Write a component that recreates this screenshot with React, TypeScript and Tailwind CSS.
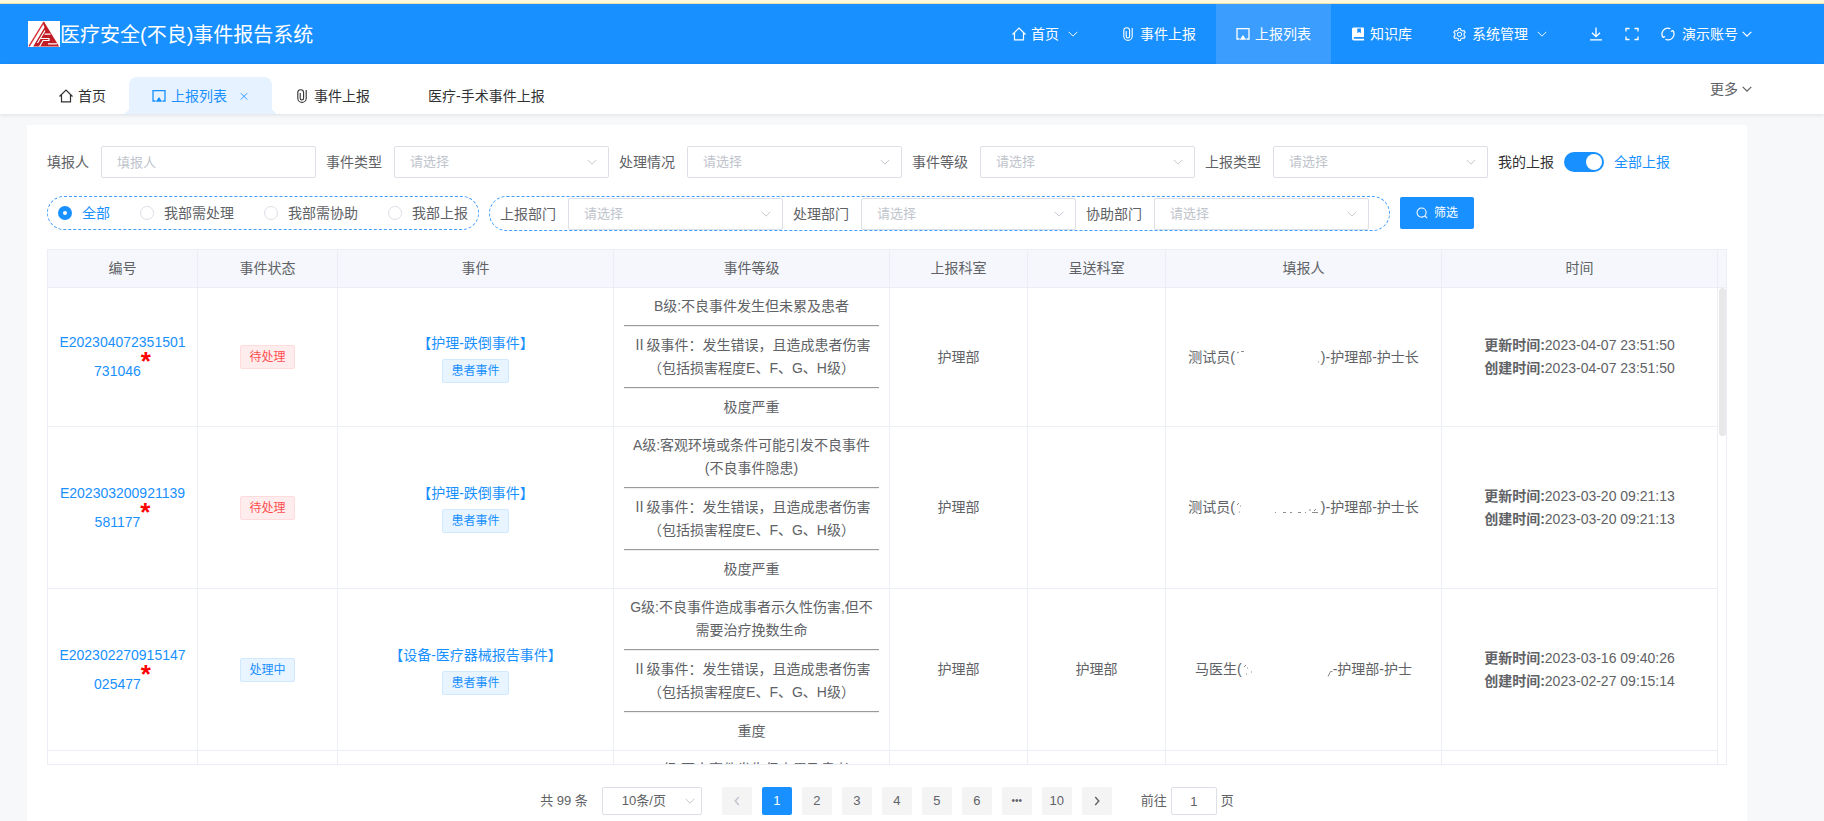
import { useState } from 'react';
import type { ReactNode } from 'react';
import { AiOutlineSetting } from 'react-icons/ai';
import clsx from 'clsx';

interface ReportEvent {
  id: string;
  idTail: string;
  status: '待处理' | '处理中';
  title: string;
  levels: string[];
  reportDept: string;
  sendDept: string;
  reporter: { name: string; rest: string; trace: string };
  updated: string;
  created: string;
}

const LEVEL_TWO = 'Ⅱ级事件：发生错误，且造成患者伤害（包括损害程度E、F、G、H级）';

const events: ReportEvent[] = [
  {
    id: 'E202304072351501',
    idTail: '731046',
    status: '待处理',
    title: '【护理-跌倒事件】',
    levels: ['B级:不良事件发生但未累及患者', LEVEL_TWO, '极度严重'],
    reportDept: '护理部',
    sendDept: '',
    reporter: { name: '测试员(', rest: ')-护理部-护士长', trace: 'M2 3l2-1M6 1.5h3M83 12h1' },
    updated: '2023-04-07 23:51:50',
    created: '2023-04-07 23:51:50'
  },
  {
    id: 'E202303200921139',
    idTail: '581177',
    status: '待处理',
    title: '【护理-跌倒事件】',
    levels: ['A级:客观环境或条件可能引发不良事件(不良事件隐患)', LEVEL_TWO, '极度严重'],
    reportDept: '护理部',
    sendDept: '',
    reporter: { name: '测试员(', rest: ')-护理部-护士长', trace: 'M2 4l2-2M5 5h1M4 11h1M40 11.500h1M48 11.500h3M55 11.500h2M63 11.500h3M70 11.500h1M74 9h2M77 11.500h6M79 10l2-2' },
    updated: '2023-03-20 09:21:13',
    created: '2023-03-20 09:21:13'
  },
  {
    id: 'E202302270915147',
    idTail: '025477',
    status: '处理中',
    title: '【设备-医疗器械报告事件】',
    levels: ['G级:不良事件造成事者示久性伤害,但不需要治疗挽数生命', LEVEL_TWO, '重度'],
    reportDept: '护理部',
    sendDept: '护理部',
    reporter: { name: '马医生(', rest: '-护理部-护士', trace: 'M2 4l2-2M5 5h1M4 11h1M9 9h1M86 13.500l2.500-5h2' },
    updated: '2023-03-16 09:40:26',
    created: '2023-02-27 09:15:14'
  },
  {
    id: 'E202302210915032',
    idTail: '410268',
    status: '处理中',
    title: '【护理-跌倒事件】',
    levels: ['B级:不良事件发生但未累及患者', LEVEL_TWO, '重度'],
    reportDept: '护理部',
    sendDept: '护理部',
    reporter: { name: '马医生(', rest: ')-护理部-护士', trace: '' },
    updated: '2023-02-21 09:15:03',
    created: '2023-02-21 09:15:03'
  }
];

const columns = ['编号', '事件状态', '事件', '事件等级', '上报科室', '呈送科室', '填报人', '时间'];

/* ---------- ICONS ---------- */

function Svg({ children, className }: { children: ReactNode; className?: string }) {
  return (
    <svg viewBox="0 0 14 14" fill="none" stroke="currentColor" aria-hidden="true" className={clsx('shrink-0', className ?? 'h-3.5 w-3.5')}>
      {children}
    </svg>
  );
}

const HomeIcon = () => (
  <Svg><path d="M.5 7.500 7 1l6.500 6.500M2.500 6v6.900h9V6" strokeWidth="1.200" /></Svg>
);
const ClipIcon = () => (
  <Svg><path d="M5.200 4v5.300a1.700 1.700 0 0 0 3.400 0V3.600a2.900 2.900 0 0 0-5.800 0v5.600a4.200 4.200 0 0 0 8.400 0V1" strokeWidth="1.100" /></Svg>
);
const ScreenIcon = () => (
  <Svg>
    <path d="M3.500 12H1V1.600h12V12h-2.500" strokeWidth="1.300" />
    <path d="m7 8 3.300 4.800H3.700z" fill="currentColor" stroke="none" />
  </Svg>
);
const BookIcon = () => (
  <Svg>
    <path fillRule="evenodd" d="M2.500.5h9.500a1 1 0 0 1 1 1V10H3.600a.9.9 0 0 0 0 1.800H13v1.700H2.800A1.800 1.800 0 0 1 1 11.700V2A1.500 1.500 0 0 1 2.500.5ZM6.300 1.500v4.800l1.800-1.400 1.800 1.400V1.500Z" fill="currentColor" stroke="none" />
  </Svg>
);
const DownloadIcon = () => (
  <Svg><path d="M7 .5v9M3 5.700l4 4 4-4M1 12.800h12" strokeWidth="1.300" /></Svg>
);
const FullscreenIcon = () => (
  <Svg><path d="M1 4.500V1.500h3.500M9.500 1.500H13v3M13 9.500v3H9.500M4.500 12.500H1v-3" strokeWidth="1.300" /></Svg>
);
const RefreshIcon = () => (
  <Svg><path d="M2.200 10.400A5.800 5.800 0 0 1 9.500 1.800M11.800 3.600A5.800 5.800 0 0 1 4.500 12.200M.8 8.700l1.400 1.800 1.900-1.100M13.200 5.300l-1.400-1.800-1.900 1.100" strokeWidth="1.200" /></Svg>
);
const SearchIcon = () => (
  <Svg className="h-3 w-3"><circle cx="6.500" cy="6.500" r="5.300" strokeWidth="1.200" /><path d="m10.300 10.300 2.700 2.700" strokeWidth="1.200" /></Svg>
);
const ChevronDown = ({ bold, className }: { bold?: boolean; className?: string }) => (
  <Svg className={clsx('h-2.5 w-2.5', className)}><path d="m1 4 6 6 6-6" strokeWidth={bold ? 1.8 : 1.3} /></Svg>
);

function Logo() {
  return (
    <svg viewBox="0 0 32 26" className="h-[26px] w-8 shrink-0 bg-white" aria-hidden="true">
      <path d="M16 .8 1 25.300" fill="none" stroke="#d6303a" strokeWidth="1.400" />
      <path d="M16 .8 31.200 25.500H5.200L16.500 6.500 15.200 3Z" fill="#c01d26" />
      <path d="M17 9.500 9.500 22M13 17.500h8v2h-6l-3.500 6" fill="none" stroke="#fff" strokeWidth="1.200" />
      <path d="M16.500 13.200h6M20 22.800h9" stroke="#fff" strokeWidth="1.200" />
    </svg>
  );
}

/* ---------- FORM PARTS ---------- */

function SelectField({ id, label }: { id: string; label: string }) {
  return (
    <div className="flex items-center gap-3">
      <label htmlFor={id}>{label}</label>
      <div className="relative">
        <select id={id} className="h-8 w-[215px] appearance-none rounded-xs border border-[#dcdfe6] bg-white px-[15px] text-[13px] text-[#c0c4cc] outline-none">
          <option>请选择</option>
        </select>
        <ChevronDown className="pointer-events-none absolute top-[11px] right-3 text-[#c0c4cc]" />
      </div>
    </div>
  );
}

function Tag({ danger, children }: { danger?: boolean; children: ReactNode }) {
  return (
    <span
      className={clsx(
        'inline-block h-6 rounded-xs border px-2 text-xs leading-[22px]',
        danger ? 'border-[#ffdbdb] bg-[#ffeded] text-[#ff4d4f]' : 'border-[#d1e9ff] bg-[#e8f4ff] text-[#1890ff]'
      )}
    >
      {children}
    </span>
  );
}

function Columns() {
  return (
    <colgroup>
      <col className="w-[150px]" />
      <col className="w-[140px]" />
      <col />
      <col />
      <col className="w-[138px]" />
      <col className="w-[138px]" />
      <col />
      <col />
    </colgroup>
  );
}

function EventRow({ event }: { event: ReportEvent }) {
  // a missing closing bracket belongs to the masked part, which is wider then
  const wideMask = !event.reporter.rest.startsWith(')');

  return (
    <tr className="[&>td]:border-r [&>td]:border-b [&>td]:border-[#ebeef5] [&>td]:px-[10px] [&>td]:py-[7px]">
      <td>
        <a href="#" className="block leading-[29px] text-[#1890ff]">
          {event.id}
          <span className="flex h-[29px] justify-center">
            {event.idTail}
            <span className="text-[26px] leading-[8px] font-bold text-[#ff0000]">*</span>
          </span>
        </a>
      </td>
      <td><Tag danger={event.status === '待处理'}>{event.status}</Tag></td>
      <td>
        <a href="#" className="mb-1 block text-[#1890ff]">{event.title}</a>
        <Tag>患者事件</Tag>
      </td>
      <td>
        {event.levels.map((level, i) => (
          <div key={level}>
            {i > 0 && <hr className="my-[7px] h-[2px] border-t border-b border-t-[#9a9a9a] border-b-[#eeeeee]" />}
            <p>{level}</p>
          </div>
        ))}
      </td>
      <td>{event.reportDept}</td>
      <td>{event.sendDept}</td>
      <td>
        <div className="flex items-center justify-center">
          {event.reporter.name}
          <svg viewBox={wideMask ? '0 0 91 14' : '0 0 86 14'} className={clsx('h-3.5', wideMask ? 'w-[91px]' : 'w-[86px]')} fill="none" stroke="#8b8d92" aria-hidden="true">
            <path d={event.reporter.trace} />
          </svg>
          {event.reporter.rest}
        </div>
      </td>
      <td>
        <p><b>更新时间:</b>{event.updated}</p>
        <p><b>创建时间:</b>{event.created}</p>
      </td>
    </tr>
  );
}

/* ---------- PAGE ---------- */

export default function App() {
  const [scope, setScope] = useState('全部');
  const [showAll, setShowAll] = useState(true);
  const [page, setPage] = useState('1');

  return (
    <div className="flex h-screen flex-col overflow-hidden bg-[#f6f8fa] font-['Liberation_Sans','Noto_Sans_CJK_SC',sans-serif] text-sm text-[#606266]">
      <div className="h-1 shrink-0 border-b border-[#ece0ae] bg-[#fff8dc]" />

      {/* HEADER */}
      <header className="flex h-[60px] shrink-0 items-center bg-[#1890ff] pr-[72px] pl-7 text-white">
        <Logo />
        <h1 className="pt-0.5 text-xl">医疗安全(不良)事件报告系统</h1>
        <nav className="ml-auto flex h-full [&>a]:flex [&>a]:items-center [&>a]:gap-[5px] [&>a]:px-5">
          <a href="#"><HomeIcon />首页<ChevronDown className="mr-[3px] ml-1" /></a>
          <a href="#"><ClipIcon />事件上报</a>
          <a href="#" className="bg-[#3b9eff]"><ScreenIcon />上报列表</a>
          <a href="#"><BookIcon />知识库</a>
          <a href="#"><AiOutlineSetting className="h-[15px] w-[15px]" />系统管理<ChevronDown className="mr-[3px] ml-1" /></a>
        </nav>
        <div className="ml-[19px] flex items-center gap-[22px]">
          <button aria-label="下载"><DownloadIcon /></button>
          <button aria-label="全屏"><FullscreenIcon /></button>
          <button className="flex items-center gap-[7px]">
            <RefreshIcon />
            <span className="flex items-center gap-1">演示账号<ChevronDown bold /></span>
          </button>
        </div>
      </header>

      {/* TABS */}
      <div className="z-10 flex h-[50px] shrink-0 items-end bg-white pr-[72px] pl-9 text-[#303133] shadow-[0_1px_4px_rgba(0,21,41,0.10)]">
        <a href="#" className="flex h-[37px] items-center gap-[5px] px-[23px]"><HomeIcon />首页</a>
        <div className="relative flex h-[37px] items-center rounded-t-lg bg-[#e6f2ff] px-[23px] text-[#1890ff] before:absolute before:bottom-0 before:-left-[7px] before:h-[7px] before:w-[7px] before:bg-[radial-gradient(circle_at_0_0,transparent_7px,#e6f2ff_7px)] after:absolute after:-right-[7px] after:bottom-0 after:h-[7px] after:w-[7px] after:bg-[radial-gradient(circle_at_100%_0,transparent_7px,#e6f2ff_7px)]">
          <a href="#" className="flex items-center gap-[5px]"><ScreenIcon />上报列表</a>
          <button aria-label="关闭" className="ml-3">
            <Svg className="h-2.5 w-2.5"><path d="m2.500 3 9 9M11.500 3l-9 9" strokeWidth="1.200" /></Svg>
          </button>
        </div>
        <a href="#" className="flex h-[37px] items-center gap-[5px] px-[23px]"><ClipIcon />事件上报</a>
        <a href="#" className="ml-3 flex h-[37px] items-center px-[23px]">医疗-手术事件上报</a>
        <button className="ml-auto flex h-full items-center gap-1 text-[#606266]">更多<ChevronDown bold /></button>
      </div>

      {/* CONTENT */}
      <main className="mt-[11px] mr-[77px] ml-[27px] flex min-h-0 flex-1 flex-col bg-white px-5 pt-[21px] pb-1.5">
        <form className="flex flex-col gap-[18px]" onSubmit={e => e.preventDefault()}>
          <div className="flex flex-wrap items-center gap-[10px]">
            <div className="flex items-center gap-3">
              <label htmlFor="reporter">填报人</label>
              <input id="reporter" placeholder="填报人" className="h-8 w-[215px] rounded-xs border border-[#dcdfe6] px-[15px] text-[13px] outline-none placeholder:text-[#c0c4cc]" />
            </div>
            <SelectField id="event-type" label="事件类型" />
            <SelectField id="progress" label="处理情况" />
            <SelectField id="event-level" label="事件等级" />
            <SelectField id="report-type" label="上报类型" />
            <label className="flex items-center gap-[10px]">
              <span className="text-[#303133]">我的上报</span>
              <input type="checkbox" role="switch" checked={showAll} onChange={e => setShowAll(e.target.checked)} className="peer sr-only" />
              <span className="flex h-5 w-10 rounded-full bg-[#dcdfe6] p-[2px] peer-checked:justify-end peer-checked:bg-[#1890ff]">
                <span className="h-4 w-4 rounded-full bg-white" />
              </span>
              <span className="text-[#1890ff]">全部上报</span>
            </label>
          </div>

          <div className="flex flex-wrap items-start gap-[10px]">
            <fieldset className="flex h-[34px] items-center gap-[30px] rounded-full border border-dashed border-[#409eff] px-[10px]">
              {['全部', '我部需处理', '我部需协助', '我部上报'].map(name => (
                <label key={name} className={clsx('flex items-center gap-[10px]', scope === name && 'text-[#1890ff]')}>
                  <input
                    type="radio"
                    name="scope"
                    checked={scope === name}
                    onChange={() => setScope(name)}
                    className="h-3.5 w-3.5 appearance-none rounded-full border border-[#dcdfe6] bg-white checked:border-[5px] checked:border-[#1890ff]"
                  />
                  {name}
                </label>
              ))}
            </fieldset>
            <div className="flex h-[35px] items-end gap-[10px] rounded-full border border-dashed border-[#409eff] pr-5 pl-[10px]">
              <SelectField id="report-dept" label="上报部门" />
              <SelectField id="handle-dept" label="处理部门" />
              <SelectField id="assist-dept" label="协助部门" />
            </div>
            <button className="mt-px flex h-8 items-center gap-1.5 rounded-xs bg-[#1890ff] px-4 text-xs text-white"><SearchIcon />筛选</button>
          </div>
        </form>

        {/* TABLE */}
        <div className="mt-[18px] flex min-h-0 flex-1 flex-col border border-[#ebeef5] text-center leading-[23px]">
          <div className="shrink-0 border-b border-[#ebeef5] bg-[#f5f7fc] pr-2">
            <table className="w-full table-fixed border-separate border-spacing-0">
              <Columns />
              <thead>
                <tr>
                  {columns.map(name => (
                    <th key={name} className="border-r border-[#ebeef5] py-[7px] font-normal">{name}</th>
                  ))}
                </tr>
              </thead>
            </table>
          </div>
          <div className="relative flex min-h-0 flex-1 flex-col">
            <div className="min-h-0 flex-1 overflow-y-auto pr-2 [scrollbar-width:none]">
              <table className="w-full table-fixed border-separate border-spacing-0">
                <Columns />
                <tbody>
                  {events.map(event => <EventRow key={event.id} event={event} />)}
                </tbody>
              </table>
            </div>
            <div className="absolute top-0 right-0 h-[148px] w-[7px] rounded-full bg-[#e8e8e8]" />
          </div>
        </div>

        {/* PAGINATION */}
        <div className="mt-[22px] flex h-7 shrink-0 items-center justify-center text-[13px]">
          <span>共 99 条</span>
          <div className="relative mr-5 ml-3.5">
            <select aria-label="每页条数" className="h-7 w-[100px] appearance-none rounded-xs border border-[#dcdfe6] bg-white pl-[19px] outline-none">
              <option>10条/页</option>
            </select>
            <ChevronDown className="pointer-events-none absolute top-[9px] right-[7px] text-[#c0c4cc]" />
          </div>
          <div className="flex gap-[10px] [&>button]:flex [&>button]:h-7 [&>button]:w-[30px] [&>button]:items-center [&>button]:justify-center [&>button]:rounded-xs">
            <button aria-label="上一页" disabled className="bg-[#f4f4f5] text-[#c0c4cc]"><Svg className="h-2.5 w-2.5"><path d="M9.500 1.500 4.500 7l5 5.500" strokeWidth="2" /></Svg></button>
            {['1', '2', '3', '4', '5', '6', '•••', '10'].map(n => (
              <button
                key={n}
                onClick={() => n !== '•••' && setPage(n)}
                className={clsx(page === n ? 'bg-[#1890ff] text-white' : 'bg-[#f4f4f5]', n === '•••' && 'text-[10px]')}
              >
                {n}
              </button>
            ))}
            <button aria-label="下一页" className="bg-[#f4f4f5]"><Svg className="h-2.5 w-2.5"><path d="m4.500 1.500 5 5.500-5 5.500" strokeWidth="2" /></Svg></button>
          </div>
          <label className="ml-[29px] flex items-center gap-1">
            前往
            <input value={page} onChange={e => setPage(e.target.value)} className="h-7 w-[46px] rounded-xs border border-[#dcdfe6] text-center outline-none" />
            页
          </label>
        </div>
      </main>
    </div>
  );
}
